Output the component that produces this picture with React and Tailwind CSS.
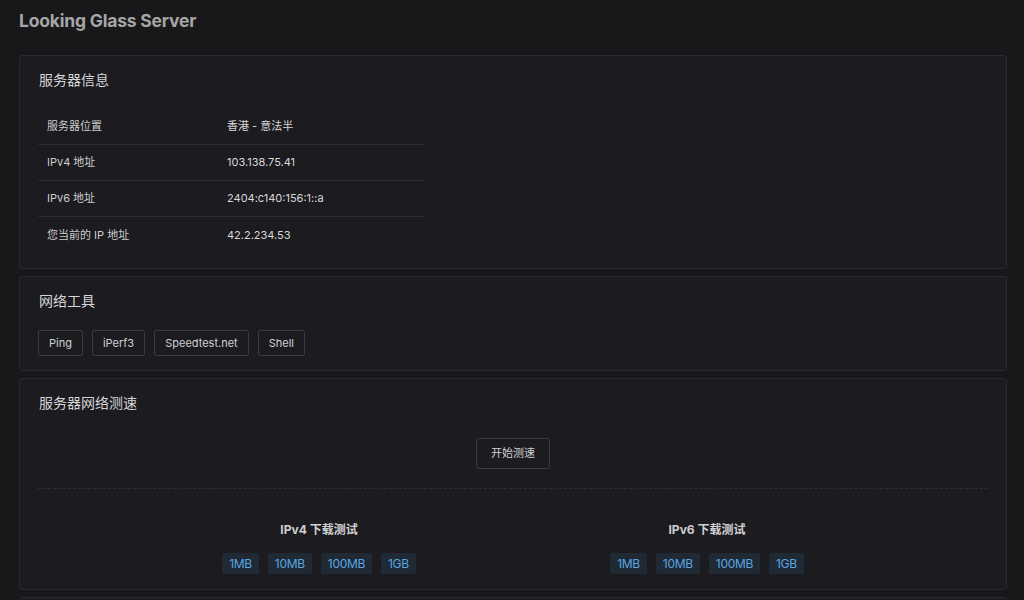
import React from "react";

const font = { fontFamily: 'Inter, "Noto Sans CJK SC", sans-serif' };

function Card({ title, children, className = "" }) {
  return (
    <div className={"rounded-[3px] border border-[#2a2a2f] bg-[#1b1b20] px-[18px] pt-[13px] " + className}>
      <div className="pl-[1px] text-[14px] leading-[22px] text-[#d6d6d6]">{title}</div>
      {children}
    </div>
  );
}

const rows = [
  ["服务器位置", "香港 - 意法半"],
  ["IPv4 地址", "103.138.75.41"],
  ["IPv6 地址", "2404:c140:156:1::a"],
  ["您当前的 IP 地址", "42.2.234.53"],
];

function DlGroup({ label }) {
  const sizes = ["1MB", "10MB", "100MB", "1GB"];
  return (
    <div className="flex flex-col items-center">
      <div className="text-[12px] font-bold leading-[18px] text-[#cfcfcf]">{label}</div>
      <div className="mt-[14px] flex gap-[9px]">
        {sizes.map((s) => (
          <div key={s} className="flex h-[21px] items-center rounded-[2px] bg-[#1f2a35] px-[7px] text-[12px] tracking-[-0.3px] text-[#5aa6e0]">
            {s}
          </div>
        ))}
      </div>
    </div>
  );
}

export default function App() {
  return (
    <div style={font} className="min-h-[600px] w-full bg-[#18181a] pl-[19px] pr-[17px] pt-[9px]">
      <h1 className="text-[17.5px] font-bold leading-[24px] tracking-[-0.2px] text-[#a6a6a6]">Looking Glass Server</h1>
      <div className="mt-[22px] flex flex-col gap-[7px]">
        <Card title="服务器信息" className="pb-[15px]">
          <div className="mt-[18px] w-[386px]">
            {rows.map(([k, v], i) => (
              <div key={k} className={"flex h-9 items-center text-[11px] text-[#cdcdcd] " + (i < rows.length - 1 ? "border-b border-[#2c2c31]" : "")}>
                <div className="w-[189px] pl-[9px]">{k}</div>
                <div className="text-[#d8d8d8]">{v}</div>
              </div>
            ))}
          </div>
        </Card>
        <Card title="网络工具" className="pb-[14px]">
          <div className="mt-[18px] flex gap-[9px]">
            {["Ping", "iPerf3", "Speedtest.net", "Shell"].map((b) => (
              <div key={b} className="flex h-[26px] items-center rounded-[2px] border border-[#3a3a40] px-[10px] text-[11px] text-[#d0d0d0]">
                {b}
              </div>
            ))}
          </div>
        </Card>
        <Card title="服务器网络测速" className="pb-[15px]">
          <div className="mt-[24px] flex justify-center">
            <div className="flex h-[31px] items-center rounded-[3px] border border-[#3a3a40] px-[14px] text-[11px] text-[#d0d0d0]">
              开始测速
            </div>
          </div>
          <div className="mt-[19px] border-t border-dashed border-[#2e2e33]" />
          <div className="mx-auto mt-[32px] grid w-[776px] grid-cols-2">
            <DlGroup label="IPv4 下载测试" />
            <DlGroup label="IPv6 下载测试" />
          </div>
        </Card>
        <div className="h-[20px] rounded-[3px] border border-[#2a2a2f] bg-[#1b1b20]" />
      </div>
    </div>
  );
}
